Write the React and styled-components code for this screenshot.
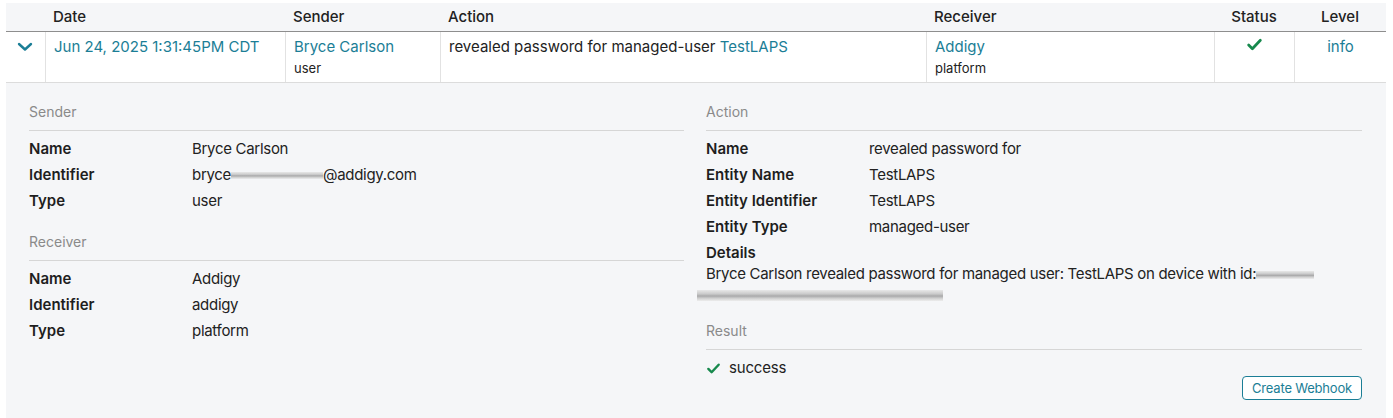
import React from "react";
import styled, { createGlobalStyle } from "styled-components";

const Global = createGlobalStyle`
  html, body { margin: 0; padding: 0; background: #ffffff; }
  body { font-family: Inter, "Noto Sans", "Liberation Sans", sans-serif; color: #222; }
`;

const TEAL = "#1b7e96";

const Page = styled.div`
  padding: 3px 7px 0 6px;
`;

const Table = styled.div`
  width: 1380px;
`;

const cols = "39px 240px 155px 486px 288px 80px 92px";

const HeaderRow = styled.div`
  display: grid;
  grid-template-columns: ${cols};
  height: 29px;
  background: #f5f6f8;
  border-bottom: 1px solid #8e8e8e;
  box-sizing: border-box;
`;

const HeadCell = styled.div`
  display: flex;
  align-items: center;
  justify-content: ${(p) => (p.$center ? "center" : "flex-start")};
  padding: 0 8px 2px;
  font-size: 15px;
  font-weight: 500;
  color: #222;
`;

const DataRow = styled.div`
  display: grid;
  grid-template-columns: ${cols};
  height: 51px;
  background: #fff;
  border-bottom: 1px solid #dcdcdc;
  box-sizing: border-box;
`;

const Cell = styled.div`
  display: flex;
  flex-direction: column;
  align-items: ${(p) => (p.$center ? "center" : "flex-start")};
  padding: 5px 8px 0;
  border-left: ${(p) => (p.$first ? "none" : "1px solid #e2e2e2")};
  font-size: 15px;
  line-height: 20px;
  color: #222;
`;

const Link = styled.span`
  color: ${TEAL};
`;

const Sub = styled.span`
  font-size: 13px;
  line-height: 20px;
  margin-top: 1px;
  color: #222;
`;

const Panel = styled.div`
  background: #f5f6f8;
  padding: 19px 24px 18px 23px;
  display: grid;
  grid-template-columns: 655px 656px;
  column-gap: 22px;
  min-height: 335px;
  box-sizing: border-box;
`;

const Column = styled.div`
  display: flex;
  flex-direction: column;
`;

const SectionTitle = styled.div`
  font-size: 14px;
  line-height: 20px;
  color: #8a8a8a;
  padding-bottom: 8px;
  border-bottom: 1px solid #d6d6d6;
  margin-top: ${(p) => p.$mt || 0}px;
`;

const Fields = styled.div`
  display: flex;
  flex-direction: column;
  padding-top: 5px;
`;

const Field = styled.div`
  display: grid;
  grid-template-columns: 163px 1fr;
  font-size: 15px;
  line-height: 26px;
  height: 26px;
`;

const Label = styled.div`
  font-weight: 600;
  color: #1e1e1e;
`;

const Value = styled.div`
  color: #222;
  letter-spacing: -0.3px;
`;

const DetailsLabel = styled.div`
  font-weight: 600;
  font-size: 15px;
  line-height: 26px;
  color: #1e1e1e;
`;

const DetailsText = styled.div`
  font-size: 15px;
  line-height: 20px;
  color: #222;
  letter-spacing: -0.3px;
  margin-top: -2px;
`;

const Blur = styled.span`
  display: inline-block;
  width: ${(p) => p.$w}px;
  height: ${(p) => p.$h || 9}px;
  vertical-align: middle;
  background: linear-gradient(
    180deg,
    #e6e6e6 0%,
    #c4c4c4 35%,
    #9d9d9d 55%,
    #c8c8c8 75%,
    #ececec 100%
  );
  opacity: 0.85;
  filter: blur(0.6px);
`;

const BlurLine = styled.div`
  margin-left: -9px;
  margin-top: 6px;
  line-height: 0;
`;

const ResultRow = styled.div`
  display: flex;
  align-items: center;
  gap: 8px;
  font-size: 15px;
  line-height: 20px;
  letter-spacing: -0.2px;
  padding-top: 8px;
`;

const ButtonRow = styled.div`
  display: flex;
  justify-content: flex-end;
  margin-top: -2px;
`;

const Button = styled.button`
  width: 120px;
  height: 24px;
  border: 1px solid ${TEAL};
  border-radius: 4px;
  background: #fff;
  color: ${TEAL};
  font-family: Inter, "Liberation Sans", sans-serif;
  font-size: 13px;
  letter-spacing: -0.2px;
  padding: 0;
  cursor: pointer;
`;

const Check = ({ size = 16 }) => (
  <svg width={size} height={size} viewBox="0 0 16 16" fill="none">
    <path
      d="M2.5 8.5 L6 12 L13.5 4"
      stroke="#17894d"
      strokeWidth="2.6"
      strokeLinecap="round"
      strokeLinejoin="round"
    />
  </svg>
);

const Chevron = () => (
  <svg width="20" height="20" viewBox="0 0 20 20" fill="none">
    <path
      d="M4 7 L10 12.5 L16 7"
      stroke={TEAL}
      strokeWidth="2.4"
      strokeLinecap="round"
      strokeLinejoin="round"
    />
  </svg>
);

const ChevronCell = styled(Cell)`
  align-items: flex-start;
  padding: 5px 0 0 9px;
`;

const CheckCell = styled(Cell)`
  padding-top: 4px;
`;

export default function App() {
  return (
    <>
      <Global />
      <Page>
        <Table>
          <HeaderRow>
            <HeadCell />
            <HeadCell>Date</HeadCell>
            <HeadCell>Sender</HeadCell>
            <HeadCell>Action</HeadCell>
            <HeadCell>Receiver</HeadCell>
            <HeadCell $center>Status</HeadCell>
            <HeadCell $center>Level</HeadCell>
          </HeaderRow>
          <DataRow>
            <ChevronCell $first>
              <Chevron />
            </ChevronCell>
            <Cell>
              <Link>Jun 24, 2025 1:31:45PM CDT</Link>
            </Cell>
            <Cell>
              <Link>Bryce Carlson</Link>
              <Sub>user</Sub>
            </Cell>
            <Cell>
              <span>
                revealed password for managed-user <Link>TestLAPS</Link>
              </span>
            </Cell>
            <Cell>
              <Link>Addigy</Link>
              <Sub>platform</Sub>
            </Cell>
            <CheckCell $center>
              <Check size={17} />
            </CheckCell>
            <Cell $center>
              <Link>info</Link>
            </Cell>
          </DataRow>
          <Panel>
            <Column>
              <SectionTitle>Sender</SectionTitle>
              <Fields>
                <Field>
                  <Label>Name</Label>
                  <Value>Bryce Carlson</Value>
                </Field>
                <Field>
                  <Label>Identifier</Label>
                  <Value>
                    bryce
                    <Blur $w={92} $h={7} />
                    @addigy.com
                  </Value>
                </Field>
                <Field>
                  <Label>Type</Label>
                  <Value>user</Value>
                </Field>
              </Fields>
              <SectionTitle $mt={18}>Receiver</SectionTitle>
              <Fields>
                <Field>
                  <Label>Name</Label>
                  <Value>Addigy</Value>
                </Field>
                <Field>
                  <Label>Identifier</Label>
                  <Value>addigy</Value>
                </Field>
                <Field>
                  <Label>Type</Label>
                  <Value>platform</Value>
                </Field>
              </Fields>
            </Column>
            <Column>
              <SectionTitle>Action</SectionTitle>
              <Fields>
                <Field>
                  <Label>Name</Label>
                  <Value>revealed password for</Value>
                </Field>
                <Field>
                  <Label>Entity Name</Label>
                  <Value>TestLAPS</Value>
                </Field>
                <Field>
                  <Label>Entity Identifier</Label>
                  <Value>TestLAPS</Value>
                </Field>
                <Field>
                  <Label>Entity Type</Label>
                  <Value>managed-user</Value>
                </Field>
                <DetailsLabel>Details</DetailsLabel>
                <DetailsText>
                  Bryce Carlson revealed password for managed user: TestLAPS on
                  device with id:
                  <Blur $w={58} $h={8} />
                </DetailsText>
                <BlurLine>
                  <Blur $w={246} $h={11} />
                </BlurLine>
              </Fields>
              <SectionTitle $mt={20}>Result</SectionTitle>
              <ResultRow>
                <Check size={15} />
                success
              </ResultRow>
              <ButtonRow>
                <Button>Create Webhook</Button>
              </ButtonRow>
            </Column>
          </Panel>
        </Table>
      </Page>
    </>
  );
}
